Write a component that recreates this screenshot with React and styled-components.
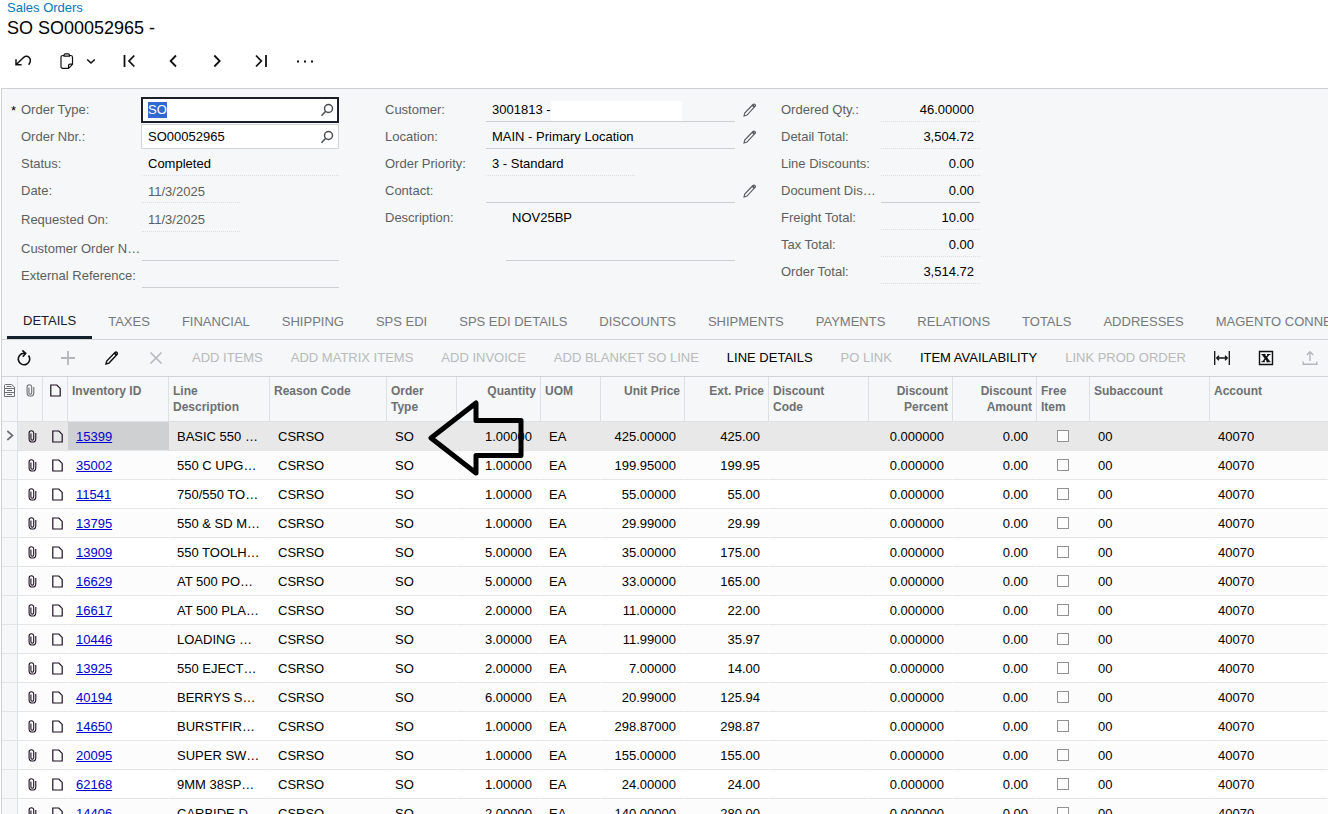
import React from 'react';
import styled, { createGlobalStyle, css } from 'styled-components';

const GlobalStyle = createGlobalStyle`
  * {
    box-sizing: border-box;
  }

  body {
    margin: 0;
    background: #fff;
    color: #000;
    font: 13px/16px "Liberation Sans", Arial, sans-serif;
  }

  button, input, textarea {
    margin: 0;
    padding: 0;
    border: 0;
    border-radius: 0;
    outline: 0;
    background: none;
    color: inherit;
    font: inherit;
  }

  ::selection {
    background: #3367d1;
    color: #fff;
  }
`;

const Page = styled.div`
  display: flex;
  flex-direction: column;
  height: 100vh;
  overflow: hidden;
`;

const PageHeader = styled.header`
  padding: 0 7px;
`;

const Breadcrumb = styled.a`
  display: block;
  color: #0278bd;
  text-decoration: none;
`;

const PageTitle = styled.h1`
  margin: 0;
  font-size: 18px;
  font-weight: 400;
  line-height: 24px;
`;

const Toolbar = styled.div`
  display: flex;
  flex: none;
  align-items: center;
  height: 36px;
  overflow: hidden;
`;

const RecordToolbar = styled(Toolbar)`
  height: 48px;
  padding: 0 0 6px 1px;
`;

const SplitButton = styled.div`
  display: flex;
  padding: 0 10px 0 4px;
`;

const IconButton = styled.button`
  display: flex;
  flex: none;
  align-items: center;
  justify-content: center;
  width: ${props => props.$width || '44px'};
  height: 32px;
  color: ${props => (props.disabled ? '#b4b7b9' : '#111')};
`;

const TextButton = styled.button`
  flex: none;
  padding: 0 14px;
  height: 32px;
  color: ${props => (props.disabled ? '#b8babc' : '#000')};
  white-space: nowrap;
`;

const Panel = styled.main`
  display: flex;
  flex: 1;
  flex-direction: column;
  min-height: 0;
  margin-left: 1px;
  border-top: 1px solid #cfd2d4;
  border-left: 1px solid #cfd2d4;
  background: #f5f7f8;
`;

const Form = styled.form`
  display: flex;
  flex: none;
  align-items: flex-start;
  padding: 6px 0 15px;
`;

const FormColumn = styled.div`
  display: flex;
  flex: none;
  flex-direction: column;
  padding-left: ${props => props.$inset};
`;

const FormRow = styled.div`
  display: flex;
  align-items: stretch;
  height: ${props => (props.$tall ? '29px' : '27px')};
`;

const Label = styled.label`
  position: relative;
  flex: none;
  width: ${props => props.$width};
  padding-top: ${props => (props.$tall ? '9px' : '7px')};
  color: #5c5f61;
  white-space: nowrap;
`;

const Required = styled.span`
  position: absolute;
  left: -10px;
  top: 8px;
  color: #000;
`;

const underline = {
  solid: '1px solid #cdd0d2',
  dotted: '1px dotted #dcdfe1',
};

const Value = styled.div`
  display: flex;
  flex: none;
  align-items: center;
  width: ${props => props.$width};
  padding: ${props => (props.$muted ? '6px' : '4px')} 6px 0;
  border-bottom: ${props => underline[props.$line]};
  color: ${props => (props.$muted ? '#5c5f61' : '#000')};

  input {
    flex: ${props => (props.$masked ? 'none' : '1')};
    width: ${props => (props.$masked ? '59px' : '100%')};
    min-width: 0;
    text-align: ${props => (props.$right ? 'right' : 'left')};
  }
`;

const Mask = styled.span`
  align-self: stretch;
  width: 131px;
  margin-top: 2px;
  background: #fff;
`;

const Lookup = styled.div`
  display: flex;
  align-items: center;
  width: 198px;
  height: 25px;
  margin-top: 2px;
  padding: 1px 4px 0 6px;
  border: 1px solid #d2d5d7;
  background: #fff;

  input {
    flex: 1;
    min-width: 0;
  }

  ${props => props.$focused && css`
    height: 26px;
    padding: 0 3px 0 5px;
    border: 2px solid #1b1e2b;
  `}
`;

const LookupButton = styled.button`
  display: flex;
  color: #4a4d50;
`;

const EditButton = styled.button`
  display: flex;
  align-items: center;
  justify-content: center;
  width: 29px;
  padding-top: 3px;
  color: #55585b;
`;

const Description = styled.textarea`
  width: 229px;
  height: 58px;
  margin-left: 20px;
  padding: 7px 6px 0;
  border-bottom: 1px solid #cdd0d2;
  resize: none;
  overflow: hidden;
`;

const Tabs = styled.div`
  display: flex;
  flex: none;
  height: 37px;
  padding-left: 5px;
  border-bottom: 1px solid #cfd4d8;
  overflow: hidden;
`;

const Tab = styled.button`
  flex: none;
  padding: ${props => (props['aria-selected'] ? '2px' : '4px')} 16px 0;
  border-bottom: 3px solid ${props => (props['aria-selected'] ? '#14202b' : 'transparent')};
  color: ${props => (props['aria-selected'] ? '#14202b' : '#76797c')};
  white-space: nowrap;
`;

const GridWrap = styled.div`
  position: relative;
  flex: 1;
  min-height: 0;
  border-top: 1px solid #cfd4d8;
  overflow: hidden;
`;

const Grid = styled.table`
  width: 100%;
  border-collapse: separate;
  border-spacing: 0;
  table-layout: fixed;
`;

const HeadCell = styled.th`
  height: 45px;
  padding: ${props => (props.$icon ? '7px 0 0' : '6px 4px 0')};
  border-right: 1px solid #dde1e4;
  border-bottom: 1px solid #dde1e4;
  color: ${props => props.$color || '#6d7073'};
  font-size: 12px;
  font-weight: 700;
  text-align: ${props => props.align || 'left'};
  vertical-align: top;
  white-space: pre-line;

  &:last-child {
    border-right: 0;
  }

  svg {
    display: block;
    margin: 0 auto;
  }
`;

const Row = styled.tr`
  background: ${props => (props.$selected ? '#e8e8e8' : '#fff')};

  &:nth-child(even) {
    background: #fcfcfc;
  }
`;

const Cell = styled.td`
  height: 29px;
  padding: 2px 8px 0;
  border-right: 1px solid transparent;
  border-bottom: 1px solid #e4e5e6;
  background: ${props => (props.$active ? '#cfd0d2' : 'transparent')};
  text-align: ${props => props.align || 'left'};
  white-space: nowrap;
  overflow: hidden;
`;

const IconCell = styled(Cell)`
  padding: 0 0 0 4px;
  color: #1c0f22;

  svg {
    display: block;
    margin: 0 auto;
  }
`;

const IndicatorCell = styled(IconCell)`
  padding: 0;
  border-right-color: #dde1e4;
  background: #f5f7f8;
  color: #6d7073;
`;

const CheckCell = styled(Cell)`
  padding-top: 0;
`;

const ItemLink = styled.a`
  color: #0000d0;
  text-decoration: underline;
`;

const Checkbox = styled.input`
  display: block;
  appearance: none;
  width: 12px;
  height: 12px;
  margin: 0 auto;
  border: 1px solid #929292;
  background: #fff;
`;

const Arrow = styled.svg`
  position: absolute;
  top: 22px;
  left: 425px;
  pointer-events: none;
`;

const Icon = ({size = 16, width, stroke = 1.3, children}) => (
  <svg
    width={width || size}
    height={size}
    viewBox={`0 0 ${width || size} ${size}`}
    fill="none"
    stroke="currentColor"
    strokeWidth={stroke}
    aria-hidden="true"
  >
    {children}
  </svg>
);

const UndoIcon = () => (
  <Icon stroke={1.5}>
    <path d="M1 6.2v5.6h5.6M1.3 11.5 7.200 5.800C9.500 3.200 12 2.300 14 4.200 16 6.300 15.500 9.300 13.600 11.800" />
  </Icon>
);

const ClipboardIcon = () => (
  <Icon stroke={1.2}>
    <path d="M5 2.5H3.8A1.8 1.8 0 0 0 2 4.3v9.2a1.8 1.8 0 0 0 1.8 1.8h5.7l4-4v-7a1.800 1.800 0 0 0-1.800-1.800h-1.200M13.500 11.200H11a1.500 1.500 0 0 0-1.500 1.500v2.600M5 3.200V2.200A1.400 1.400 0 0 1 6.400.8h2.700a1.400 1.400 0 0 1 1.400 1.400v1z" />
  </Icon>
);

const ChevronDownIcon = () => (
  <Icon size={10} stroke={1.6}><path d="M1.200 3.500 5 7l3.800-3.500" /></Icon>
);

const FirstIcon = () => (
  <Icon stroke={1.8}><path d="M3.500 2v12M13.300 2.500 8 8l5.300 5.500" /></Icon>
);

const PrevIcon = () => (
  <Icon stroke={1.8}><path d="M11 2.500 5.600 8l5.400 5.500" /></Icon>
);

const NextIcon = () => (
  <Icon stroke={1.8}><path d="M5.300 2.500 10.700 8l-5.400 5.500" /></Icon>
);

const LastIcon = () => (
  <Icon stroke={1.8}><path d="M13 2v12M3 2.500 8.300 8 3 13.500" /></Icon>
);

const MoreIcon = () => (
  <Icon width={18}>
    <path d="M1 7.500h2v2H1zM8 7.500h2v2H8zM15 7.500h2v2h-2z" fill="currentColor" stroke="none" />
  </Icon>
);

const SearchIcon = () => (
  <Icon size={14} stroke={1.5}>
    <circle cx="8.500" cy="5.500" r="4" />
    <path d="M5.700 8.300 1.500 12.700" />
  </Icon>
);

const PencilIcon = ({stroke = 1.1}) => (
  <Icon size={14} stroke={stroke}>
    <path d="m1 13 .7-3L10 1.500c.6-.6 1.400-.6 2 0s.6 1.400 0 2L4 12.100z" />
    <path d="m9.500 2 2 2" strokeWidth="2" />
  </Icon>
);

const RefreshIcon = () => (
  <Icon stroke={1.6}>
    <path d="M9.300 3.300H8a5.700 5.700 0 1 0 4.500 2.200M6.300.4 9.700 3.300 6.800 6.700" />
  </Icon>
);

const PlusIcon = () => (
  <Icon stroke={1.8}><path d="M8 1v14M1 8h14" /></Icon>
);

const CrossIcon = () => (
  <Icon stroke={1.5}><path d="m2.500 2.500 11 11M13.500 2.500l-11 11" /></Icon>
);

const FitIcon = () => (
  <Icon stroke={1.3}>
    <path d="M.7 1v14M15.300 1v14M2.700 8h10.600M5 5.800 2.700 8 5 10.200M11 5.800 13.300 8 11 10.200" />
  </Icon>
);

const ExportIcon = () => (
  <Icon stroke={1.4}>
    <path d="M1.500 1.500h13v13h-13z" />
    <path d="M10.700 4.500 5 11.700" />
    <path d="m5.300 4.500 5.400 7.200" strokeWidth="2.600" />
    <path d="M3.500 4.500h4M9 4.500h3.500M3.500 11.700H7M8.500 11.700h4" strokeWidth="1" />
  </Icon>
);

const UploadIcon = () => (
  <Icon stroke={1.4}>
    <path d="M8 11V2M4.800 5 8 1.800 11.200 5M1.200 11.500v2.800h13.600v-2.800" />
  </Icon>
);

const SettingsIcon = () => (
  <Icon size={13} width={11} stroke={1}>
    <path d="M.5 4.500v-3a1 1 0 0 1 1-1h6l3 2.500v9.500H.5zM.5 4.500h10M.5 8.500h10M2.500 2.500h5M3 6.500h5M3 10.500h5" />
  </Icon>
);

const ClipIcon = () => (
  <Icon size={13} width={9} stroke={1.1}>
    <path d="M2.900 3.500v5.200a1.400 1.400 0 0 0 2.800 0V3a2.200 2.200 0 0 0-4.600 0v5.700a3.300 3.300 0 0 0 6.700 0V3" />
  </Icon>
);

const NoteIcon = () => (
  <Icon size={13} width={11} stroke={1.2}>
    <path d="M.8 1h6l3.400 3.400V12H.8z" />
  </Icon>
);

const RowArrowIcon = () => (
  <Icon size={12} width={8} stroke={1.7}><path d="M1.300 1 6.500 5.500 1.300 10" /></Icon>
);

const totals = [
  ['Ordered Qty.:', '46.00000'],
  ['Detail Total:', '3,504.72'],
  ['Line Discounts:', '0.00'],
  ['Document Dis…', '0.00', 'solid'],
  ['Freight Total:', '10.00'],
  ['Tax Total:', '0.00'],
  ['Order Total:', '3,514.72'],
];

const tabs = [
  'DETAILS', 'TAXES', 'FINANCIAL', 'SHIPPING', 'SPS EDI', 'SPS EDI DETAILS', 'DISCOUNTS',
  'SHIPMENTS', 'PAYMENTS', 'RELATIONS', 'TOTALS', 'ADDRESSES', 'MAGENTO CONNECTOR',
];

const actions = [
  {label: 'ADD ITEMS', disabled: true},
  {label: 'ADD MATRIX ITEMS', disabled: true},
  {label: 'ADD INVOICE', disabled: true},
  {label: 'ADD BLANKET SO LINE', disabled: true},
  {label: 'LINE DETAILS'},
  {label: 'PO LINK', disabled: true},
  {label: 'ITEM AVAILABILITY'},
  {label: 'LINK PROD ORDER', disabled: true},
];

const columns = [
  {title: <SettingsIcon />, width: 16, icon: true},
  {title: <ClipIcon />, width: 25, icon: true},
  {title: <NoteIcon />, width: 25, icon: true, color: '#1c0f22'},
  {title: 'Inventory ID', width: 101},
  {title: 'Line\nDescription', width: 101},
  {title: 'Reason Code', width: 117},
  {title: 'Order\nType', width: 70},
  {title: 'Quantity', width: 84, align: 'right'},
  {title: 'UOM', width: 60},
  {title: 'Unit Price', width: 84, align: 'right'},
  {title: 'Ext. Price', width: 84, align: 'right'},
  {title: 'Discount\nCode', width: 100},
  {title: 'Discount\nPercent', width: 84, align: 'right'},
  {title: 'Discount\nAmount', width: 84, align: 'right'},
  {title: 'Free\nItem', width: 53},
  {title: 'Subaccount', width: 120},
  {title: 'Account'},
];

const lines = [
  ['15399', 'BASIC 550 …', '1.00000', '425.00000', '425.00'],
  ['35002', '550 C UPG…', '1.00000', '199.95000', '199.95'],
  ['11541', '750/550 TO…', '1.00000', '55.00000', '55.00'],
  ['13795', '550 & SD M…', '1.00000', '29.99000', '29.99'],
  ['13909', '550 TOOLH…', '5.00000', '35.00000', '175.00'],
  ['16629', 'AT 500 PO…', '5.00000', '33.00000', '165.00'],
  ['16617', 'AT 500 PLA…', '2.00000', '11.00000', '22.00'],
  ['10446', 'LOADING …', '3.00000', '11.99000', '35.97'],
  ['13925', '550 EJECT…', '2.00000', '7.00000', '14.00'],
  ['40194', 'BERRYS S…', '6.00000', '20.99000', '125.94'],
  ['14650', 'BURSTFIR…', '1.00000', '298.87000', '298.87'],
  ['20095', 'SUPER SW…', '1.00000', '155.00000', '155.00'],
  ['62168', '9MM 38SP…', '1.00000', '24.00000', '24.00'],
  ['14406', 'CARBIDE D…', '2.00000', '140.00000', '280.00'],
];

const Field = ({id, label, value = '', labelWidth, width, line = 'solid', tall, muted, right, masked, edit}) => (
  <FormRow $tall={tall}>
    <Label htmlFor={id} $width={labelWidth} $tall={tall}>{label}</Label>
    <Value $width={width} $line={line} $muted={muted} $right={right} $masked={masked}>
      <input id={id} defaultValue={value} readOnly={line === 'dotted'} />
      {masked && <Mask />}
    </Value>
    {edit && <EditButton type="button" aria-label={`Edit ${label}`}><PencilIcon /></EditButton>}
  </FormRow>
);

const LookupField = ({id, label, value, required}) => (
  <FormRow>
    <Label htmlFor={id} $width="120px">
      {required && <Required>*</Required>}
      {label}
    </Label>
    <Lookup $focused={required}>
      <input
        id={id}
        defaultValue={value}
        autoFocus={required}
        onFocus={e => e.target.select()}
      />
      <LookupButton type="button" aria-label={`Find ${label}`}><SearchIcon /></LookupButton>
    </Lookup>
  </FormRow>
);

const OrderForm = () => (
  <Form>
    <FormColumn $inset="19px">
      <LookupField id="type" label="Order Type:" value="SO" required />
      <LookupField id="nbr" label="Order Nbr.:" value="SO00052965" />
      <Field id="status" label="Status:" value="Completed" labelWidth="121px" width="197px" line="dotted" />
      <Field id="date" label="Date:" value="11/3/2025" labelWidth="121px" width="98px" line="dotted" muted />
      <Field id="requested" label="Requested On:" value="11/3/2025" labelWidth="121px" width="98px" line="dotted" muted tall />
      <Field id="customerOrder" label="Customer Order N…" labelWidth="121px" width="197px" tall />
      <Field id="external" label="External Reference:" labelWidth="121px" width="197px" />
    </FormColumn>
    <FormColumn $inset="46px">
      <Field id="customer" label="Customer:" value="3001813 -" labelWidth="101px" width="249px" masked edit />
      <Field id="location" label="Location:" value="MAIN - Primary Location" labelWidth="101px" width="249px" edit />
      <Field id="priority" label="Order Priority:" value="3 - Standard" labelWidth="101px" width="149px" line="dotted" />
      <Field id="contact" label="Contact:" labelWidth="101px" width="249px" edit />
      <FormRow>
        <Label htmlFor="description" $width="101px">Description:</Label>
        <Description id="description" defaultValue="NOV25BP" />
      </FormRow>
    </FormColumn>
    <FormColumn $inset="17px">
      {totals.map(([label, value, line = 'dotted'], i) => (
        <Field
          key={label}
          id={`total${i}`}
          label={label}
          value={value}
          labelWidth="100px"
          width="99px"
          line={line}
          right
        />
      ))}
    </FormColumn>
  </Form>
);

const LineRow = ({line: [item, description, quantity, unitPrice, extPrice], selected}) => (
  <Row $selected={selected}>
    <IndicatorCell>{selected && <RowArrowIcon />}</IndicatorCell>
    <IconCell><ClipIcon /></IconCell>
    <IconCell><NoteIcon /></IconCell>
    <Cell $active={selected}><ItemLink href="#item">{item}</ItemLink></Cell>
    <Cell>{description}</Cell>
    <Cell>CSRSO</Cell>
    <Cell>SO</Cell>
    <Cell align="right">{quantity}</Cell>
    <Cell>EA</Cell>
    <Cell align="right">{unitPrice}</Cell>
    <Cell align="right">{extPrice}</Cell>
    <Cell />
    <Cell align="right">0.000000</Cell>
    <Cell align="right">0.00</Cell>
    <CheckCell><Checkbox type="checkbox" aria-label={`Free item ${item}`} /></CheckCell>
    <Cell>00</Cell>
    <Cell>40070</Cell>
  </Row>
);

const LinesGrid = () => (
  <GridWrap>
    <Grid>
      <colgroup>
        {columns.map((col, i) => <col key={i} width={col.width} />)}
      </colgroup>
      <thead>
        <tr>
          {columns.map((col, i) => (
            <HeadCell key={i} align={col.align} $icon={col.icon} $color={col.color}>{col.title}</HeadCell>
          ))}
        </tr>
      </thead>
      <tbody>
        {lines.map((line, i) => <LineRow key={line[0]} line={line} selected={i === 0} />)}
      </tbody>
    </Grid>
    <Arrow width="100" height="80" fill="none" stroke="#000" strokeWidth="5" strokeLinejoin="round">
      <path d="M4 39 49 4v17.500h45v35H49V74z" />
    </Arrow>
  </GridWrap>
);

const App = () => (
  <Page>
    <GlobalStyle />
    <PageHeader>
      <Breadcrumb href="#orders">Sales Orders</Breadcrumb>
      <PageTitle>SO SO00052965 -</PageTitle>
    </PageHeader>
    <RecordToolbar>
      <IconButton aria-label="Undo"><UndoIcon /></IconButton>
      <SplitButton>
        <IconButton aria-label="Clipboard" $width="36px"><ClipboardIcon /></IconButton>
        <IconButton aria-label="Clipboard menu" $width="12px"><ChevronDownIcon /></IconButton>
      </SplitButton>
      <IconButton aria-label="First"><FirstIcon /></IconButton>
      <IconButton aria-label="Previous"><PrevIcon /></IconButton>
      <IconButton aria-label="Next"><NextIcon /></IconButton>
      <IconButton aria-label="Last"><LastIcon /></IconButton>
      <IconButton aria-label="More"><MoreIcon /></IconButton>
    </RecordToolbar>
    <Panel>
      <OrderForm />
      <Tabs role="tablist">
        {tabs.map((tab, i) => <Tab key={tab} role="tab" aria-selected={i === 0}>{tab}</Tab>)}
      </Tabs>
      <Toolbar>
        <IconButton aria-label="Refresh"><RefreshIcon /></IconButton>
        <IconButton aria-label="Add row" disabled><PlusIcon /></IconButton>
        <IconButton aria-label="Edit row"><PencilIcon stroke={1.4} /></IconButton>
        <IconButton aria-label="Delete row" disabled><CrossIcon /></IconButton>
        {actions.map(({label, disabled}) => (
          <TextButton key={label} disabled={disabled}>{label}</TextButton>
        ))}
        <IconButton aria-label="Fit columns"><FitIcon /></IconButton>
        <IconButton aria-label="Export"><ExportIcon /></IconButton>
        <IconButton aria-label="Upload" disabled><UploadIcon /></IconButton>
      </Toolbar>
      <LinesGrid />
    </Panel>
  </Page>
);

export default App;
